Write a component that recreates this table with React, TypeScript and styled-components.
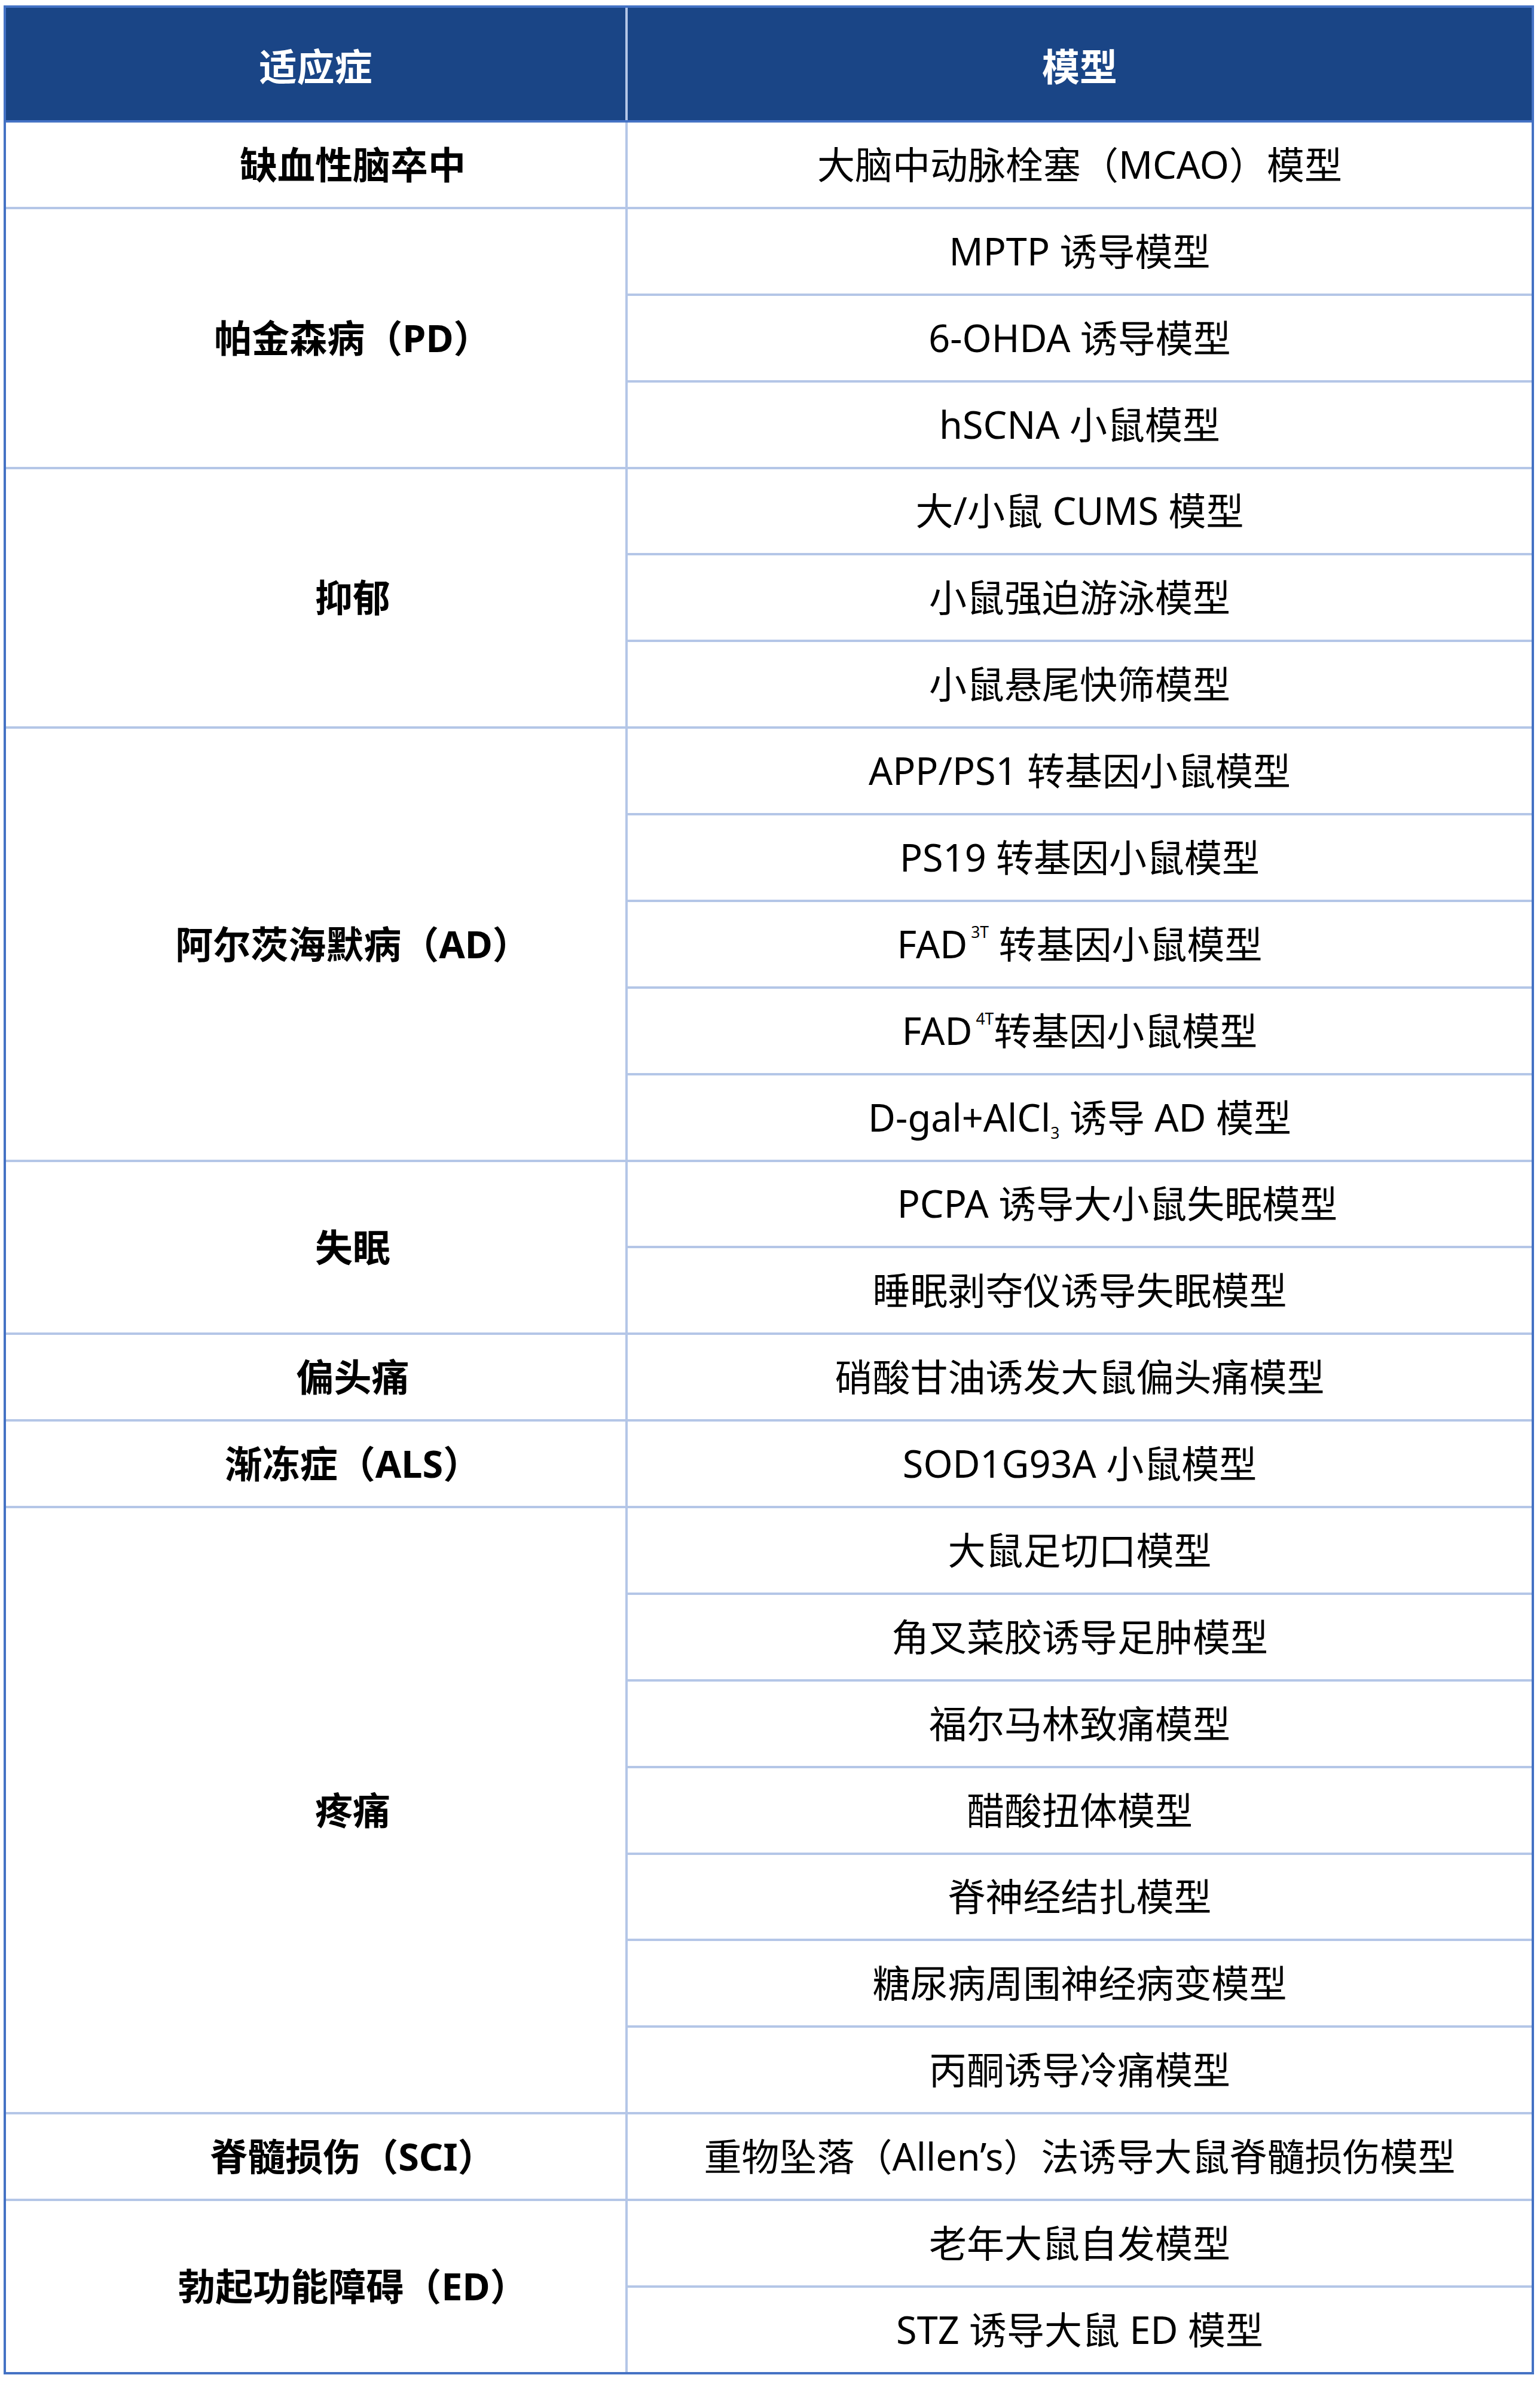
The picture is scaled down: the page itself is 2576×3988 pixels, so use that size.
import styled, { createGlobalStyle } from 'styled-components';

const GlobalStyle = createGlobalStyle`
    body {
        margin: 0;
        background: #fff;
        font-family: 'Noto Sans', 'Noto Sans CJK SC', sans-serif;
    }
`;

const ROW_HEIGHT = 140.875;

const Table = styled.div`
    width: 2552px;
    margin: 9px 0 0 6px;
    border: 4px solid #4472c4;
    background: #b4c6e7;
`;

const HeaderRow = styled.div`
    display: grid;
    grid-template-columns: 1036px 1512px;
    column-gap: 4px;
    border-bottom: 4px solid #4472c4;
`;

const HeaderCell = styled.div`
    height: 188px;
    display: flex;
    align-items: center;
    justify-content: center;
    background: #1a4586;
    color: #fff;
    font-size: 63px;
    font-weight: 700;
`;

const Body = styled.div`
    display: flex;
    flex-direction: column;
    gap: 4px;
`;

const Group = styled.div`
    display: grid;
    grid-template-columns: 1036px 1512px;
    column-gap: 4px;
`;

const Indication = styled.div`
    display: flex;
    align-items: center;
    justify-content: center;
    padding: 0 0 8px 124px;
    background: #fff;
    color: #000;
    font-size: 63px;
    font-weight: 700;
    white-space: nowrap;
`;

const ModelList = styled.div`
    display: flex;
    flex-direction: column;
    gap: 4px;
`;

const Model = styled.div`
    box-sizing: border-box;
    height: ${ROW_HEIGHT}px;
    display: flex;
    align-items: center;
    justify-content: center;
    padding-bottom: 8px;
    background: #fff;
    color: #000;
    font-size: 63px;
    white-space: pre;
`;

const ModelText = styled.span`
    display: block;
`;

const Sup = styled.sup`
    font-size: 0.42em;
    line-height: 0;
    vertical-align: 34px;
    margin-left: 6px;
`;

const Sub = styled.sub`
    font-size: 0.42em;
    line-height: 0;
    vertical-align: -12px;
`;

interface IGroup {
    name: string;
    models: React.ReactNode[];
}

const groups: IGroup[] = [
    { name: '缺血性脑卒中', models: ['大脑中动脉栓塞（MCAO）模型'] },
    { name: '帕金森病（PD）', models: ['MPTP 诱导模型', '6-OHDA 诱导模型', 'hSCNA 小鼠模型'] },
    { name: '抑郁', models: ['大/小鼠 CUMS 模型', '小鼠强迫游泳模型', '小鼠悬尾快筛模型'] },
    {
        name: '阿尔茨海默病（AD）',
        models: [
            'APP/PS1 转基因小鼠模型',
            'PS19 转基因小鼠模型',
            <>
                FAD<Sup>3T</Sup> 转基因小鼠模型
            </>,
            <>
                FAD<Sup>4T</Sup>转基因小鼠模型
            </>,
            <>
                D-gal+AlCl<Sub>3</Sub> 诱导 AD 模型
            </>,
        ],
    },
    { name: '失眠', models: ['\u3000\u3000PCPA 诱导大小鼠失眠模型', '睡眠剥夺仪诱导失眠模型'] },
    { name: '偏头痛', models: ['硝酸甘油诱发大鼠偏头痛模型'] },
    { name: '渐冻症（ALS）', models: ['SOD1G93A 小鼠模型'] },
    {
        name: '疼痛',
        models: [
            '大鼠足切口模型',
            '角叉菜胶诱导足肿模型',
            '福尔马林致痛模型',
            '醋酸扭体模型',
            '脊神经结扎模型',
            '糖尿病周围神经病变模型',
            '丙酮诱导冷痛模型',
        ],
    },
    { name: '脊髓损伤（SCI）', models: ['重物坠落（Allen’s）法诱导大鼠脊髓损伤模型'] },
    { name: '勃起功能障碍（ED）', models: ['老年大鼠自发模型', 'STZ 诱导大鼠 ED 模型'] },
];

const App = () => {
    return (
        <>
            <GlobalStyle />
            <Table>
                <HeaderRow>
                    <HeaderCell>适应症</HeaderCell>
                    <HeaderCell>模型</HeaderCell>
                </HeaderRow>
                <Body>
                    {groups.map((group) => (
                        <Group key={group.name}>
                            <Indication>{group.name}</Indication>
                            <ModelList>
                                {group.models.map((model, i) => (
                                    <Model key={i}>
                                        <ModelText>{model}</ModelText>
                                    </Model>
                                ))}
                            </ModelList>
                        </Group>
                    ))}
                </Body>
            </Table>
        </>
    );
};

export default App;
